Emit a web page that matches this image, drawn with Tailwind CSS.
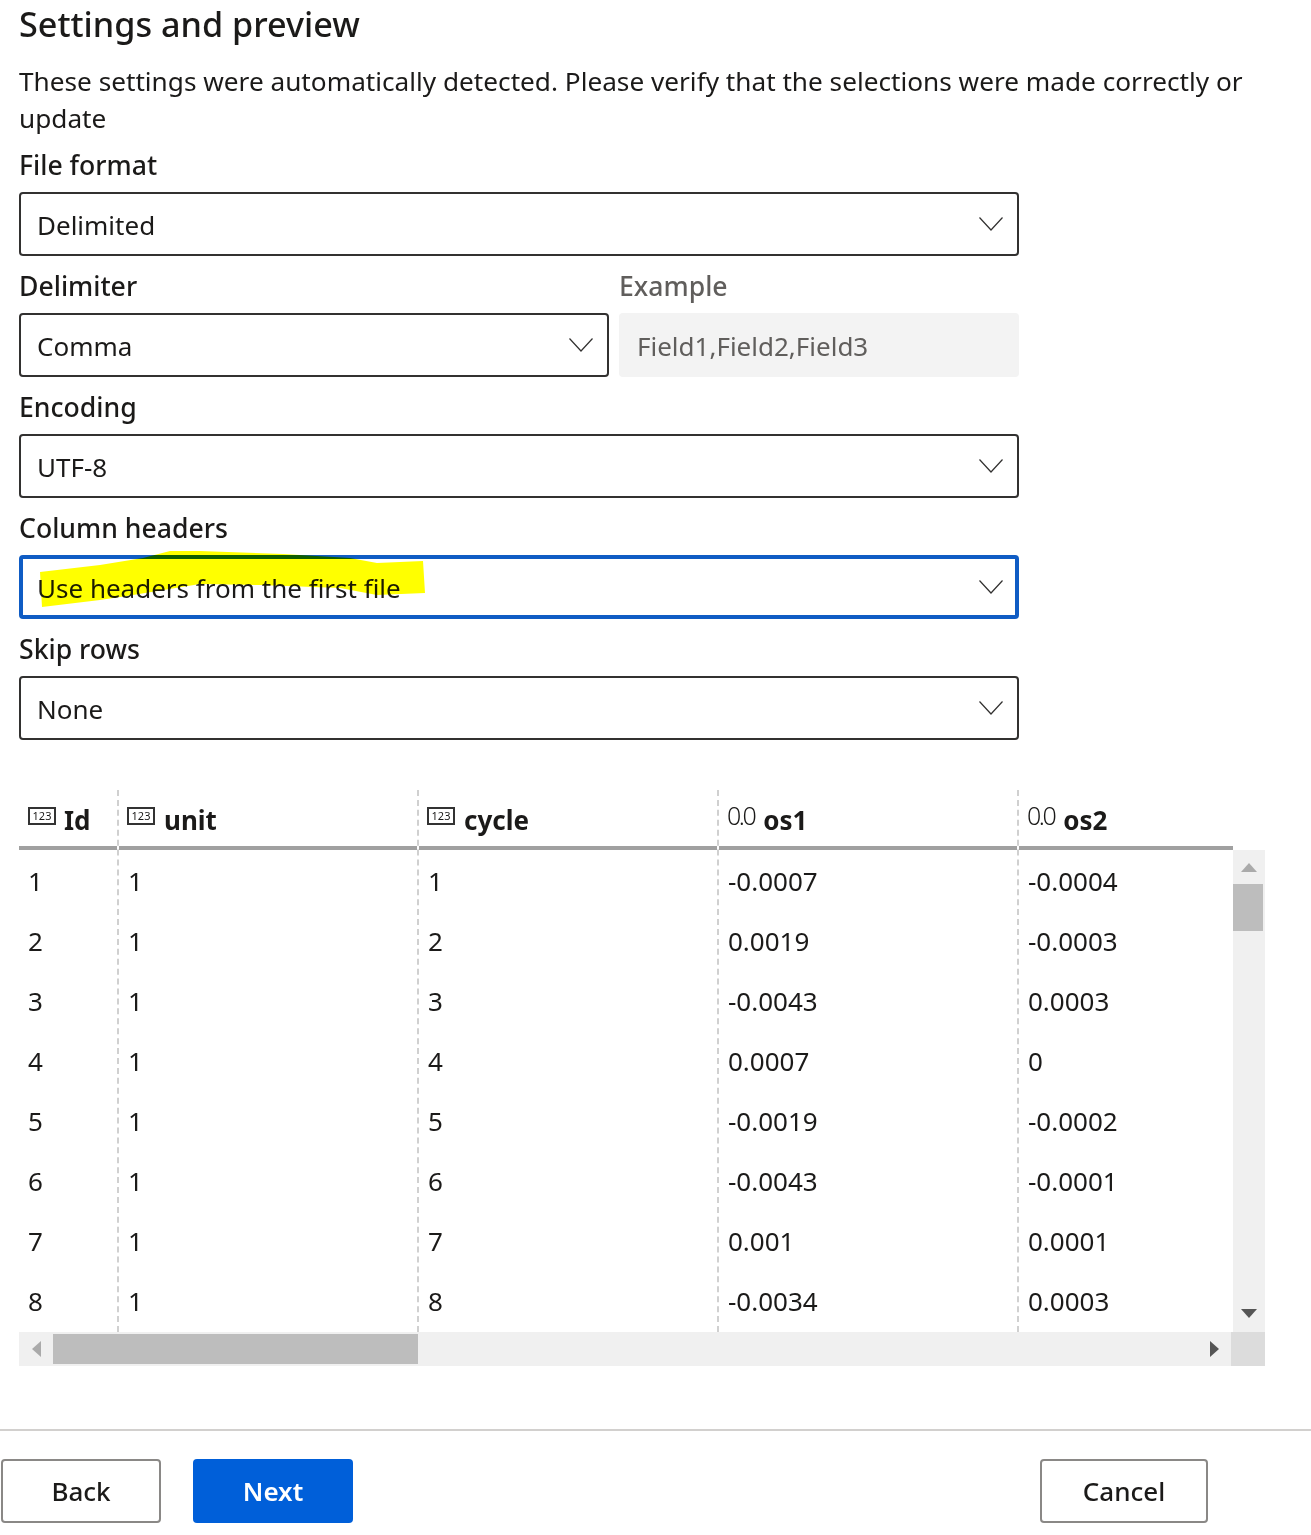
<!DOCTYPE html>
<html lang="en">
<head>
  <meta charset="UTF-8">
  <title>Settings and preview</title>
  <script src="https://cdn.jsdelivr.net/npm/@tailwindcss/browser@4"></script>
</head>
<body class="bg-white text-[#1b1a19] font-['Noto_Sans',sans-serif]">
  <div class="relative w-[1311px] h-[1535px] overflow-hidden">
    <!-- Form -->
    <div class="pl-[19px]">
      <h1 class="h-[48px] text-[34.2px] leading-[47px] font-medium">Settings and preview</h1>
      <p class="mt-[15px] w-[1270px] text-[26.2px] leading-[37px]">These settings were automatically detected. Please verify that the selections were made correctly or update</p>

      <div class="w-[1000px]">
        <label class="block h-[55px] pt-[10px] text-[26.6px] leading-[37px] font-medium">File format</label>
        <div class="flex items-center justify-between h-[64px] pl-[16px] pr-[14px] border-2 border-[#323130] rounded-[4px] text-[26px]">
          <span class="mt-[2px]">Delimited</span>
          <svg class="w-[24px] h-[14px]" viewBox="0 0 24 14" fill="none" stroke="#323130" stroke-width="1.2"><path d="M0.5 0.5 12 13 23.5 0.5"/></svg>
        </div>

        <div class="grid grid-cols-[590px_400px] gap-x-[10px]">
          <div>
            <label class="block h-[57px] pt-[12px] text-[26.6px] leading-[37px] font-medium">Delimiter</label>
            <div class="flex items-center justify-between h-[64px] pl-[16px] pr-[14px] border-2 border-[#323130] rounded-[4px] text-[26px]">
              <span class="mt-[2px]">Comma</span>
              <svg class="w-[24px] h-[14px]" viewBox="0 0 24 14" fill="none" stroke="#323130" stroke-width="1.2"><path d="M0.5 0.5 12 13 23.5 0.5"/></svg>
            </div>
          </div>
          <div>
            <label class="block h-[57px] pt-[12px] text-[26.6px] leading-[37px] font-medium text-[#605e5c]">Example</label>
            <div class="flex items-center h-[64px] pl-[18px] pt-[2px] rounded-[4px] bg-[#f3f3f3] text-[26px] text-[#605e5c]">Field1,Field2,Field3</div>
          </div>
        </div>

        <label class="block h-[57px] pt-[12px] text-[26.6px] leading-[37px] font-medium">Encoding</label>
        <div class="flex items-center justify-between h-[64px] pl-[16px] pr-[14px] border-2 border-[#323130] rounded-[4px] text-[26px]">
          <span class="mt-[2px]">UTF-8</span>
          <svg class="w-[24px] h-[14px]" viewBox="0 0 24 14" fill="none" stroke="#323130" stroke-width="1.2"><path d="M0.5 0.5 12 13 23.5 0.5"/></svg>
        </div>

        <label class="block h-[57px] pt-[12px] text-[26.6px] leading-[37px] font-medium">Column headers</label>
        <div class="flex items-center justify-between h-[64px] pl-[14px] pr-[12px] border-4 border-[#0f5cc4] rounded-[4px] text-[26px]">
          <span class="mt-[2px]">Use headers from the first file</span>
          <svg class="w-[24px] h-[14px]" viewBox="0 0 24 14" fill="none" stroke="#323130" stroke-width="1.2"><path d="M0.5 0.5 12 13 23.5 0.5"/></svg>
        </div>

        <label class="block h-[57px] pt-[12px] text-[26.6px] leading-[37px] font-medium">Skip rows</label>
        <div class="flex items-center justify-between h-[64px] pl-[16px] pr-[14px] border-2 border-[#323130] rounded-[4px] text-[26px]">
          <span class="mt-[2px]">None</span>
          <svg class="w-[24px] h-[14px]" viewBox="0 0 24 14" fill="none" stroke="#323130" stroke-width="1.2"><path d="M0.5 0.5 12 13 23.5 0.5"/></svg>
        </div>
      </div>

      <!-- Preview table -->
      <div class="mt-[50px] w-[1246px]">
        <div class="flex h-[542px]">
          <div class="flex w-[1214px] text-[26px]">
            <div class="w-[98px]">
              <div class="flex items-center h-[60px] pl-[9px] pt-[2px] border-b-4 border-[#a0a0a0] text-[26px] font-bold">
                <span class="mr-[8px] -mt-[6px] w-[28px] h-[18px] border-2 border-[#333] text-[11px] leading-[14px] text-center font-normal">123</span><span class="mt-[3px]">Id</span>
              </div>
              <div class="mt-[1px] pl-[9px]">
                <div class="h-[60px] leading-[60px]">1</div><div class="h-[60px] leading-[60px]">2</div><div class="h-[60px] leading-[60px]">3</div><div class="h-[60px] leading-[60px]">4</div><div class="h-[60px] leading-[60px]">5</div><div class="h-[60px] leading-[60px]">6</div><div class="h-[60px] leading-[60px]">7</div><div class="h-[60px] leading-[60px]">8</div>
              </div>
            </div>
            <div class="w-[300px] border-l-2 border-dashed border-[#d0d0d0]">
              <div class="flex items-center h-[60px] pl-[8px] pt-[2px] border-b-4 border-[#a0a0a0] text-[26px] font-bold">
                <span class="mr-[9px] -mt-[6px] w-[28px] h-[18px] border-2 border-[#333] text-[11px] leading-[14px] text-center font-normal">123</span><span class="mt-[3px]">unit</span>
              </div>
              <div class="mt-[1px] pl-[9px]">
                <div class="h-[60px] leading-[60px]">1</div><div class="h-[60px] leading-[60px]">1</div><div class="h-[60px] leading-[60px]">1</div><div class="h-[60px] leading-[60px]">1</div><div class="h-[60px] leading-[60px]">1</div><div class="h-[60px] leading-[60px]">1</div><div class="h-[60px] leading-[60px]">1</div><div class="h-[60px] leading-[60px]">1</div>
              </div>
            </div>
            <div class="w-[300px] border-l-2 border-dashed border-[#d0d0d0]">
              <div class="flex items-center h-[60px] pl-[8px] pt-[2px] border-b-4 border-[#a0a0a0] text-[26px] font-bold">
                <span class="mr-[9px] -mt-[6px] w-[28px] h-[18px] border-2 border-[#333] text-[11px] leading-[14px] text-center font-normal">123</span><span class="mt-[3px]">cycle</span>
              </div>
              <div class="mt-[1px] pl-[9px]">
                <div class="h-[60px] leading-[60px]">1</div><div class="h-[60px] leading-[60px]">2</div><div class="h-[60px] leading-[60px]">3</div><div class="h-[60px] leading-[60px]">4</div><div class="h-[60px] leading-[60px]">5</div><div class="h-[60px] leading-[60px]">6</div><div class="h-[60px] leading-[60px]">7</div><div class="h-[60px] leading-[60px]">8</div>
              </div>
            </div>
            <div class="w-[300px] border-l-2 border-dashed border-[#d0d0d0]">
              <div class="flex items-center h-[60px] pl-[8px] pt-[2px] border-b-4 border-[#a0a0a0] text-[26px] font-bold">
                <span class="mr-[9px] -mt-[6px] text-[25px] font-light tracking-[-2.5px]">0.0</span><span class="mt-[3px]">os1</span>
              </div>
              <div class="mt-[1px] pl-[9px]">
                <div class="h-[60px] leading-[60px]">-0.0007</div><div class="h-[60px] leading-[60px]">0.0019</div><div class="h-[60px] leading-[60px]">-0.0043</div><div class="h-[60px] leading-[60px]">0.0007</div><div class="h-[60px] leading-[60px]">-0.0019</div><div class="h-[60px] leading-[60px]">-0.0043</div><div class="h-[60px] leading-[60px]">0.001</div><div class="h-[60px] leading-[60px]">-0.0034</div>
              </div>
            </div>
            <div class="w-[216px] border-l-2 border-dashed border-[#d0d0d0]">
              <div class="flex items-center h-[60px] pl-[8px] pt-[2px] border-b-4 border-[#a0a0a0] text-[26px] font-bold">
                <span class="mr-[9px] -mt-[6px] text-[25px] font-light tracking-[-2.5px]">0.0</span><span class="mt-[3px]">os2</span>
              </div>
              <div class="mt-[1px] pl-[9px]">
                <div class="h-[60px] leading-[60px]">-0.0004</div><div class="h-[60px] leading-[60px]">-0.0003</div><div class="h-[60px] leading-[60px]">0.0003</div><div class="h-[60px] leading-[60px]">0</div><div class="h-[60px] leading-[60px]">-0.0002</div><div class="h-[60px] leading-[60px]">-0.0001</div><div class="h-[60px] leading-[60px]">0.0001</div><div class="h-[60px] leading-[60px]">0.0003</div>
              </div>
            </div>
          </div>

          <!-- Vertical scrollbar -->
          <div class="mt-[60px] w-[32px] bg-[#f0f0f0] flex flex-col items-center">
            <svg class="mt-[13px] w-[16px] h-[9px]" viewBox="0 0 16 9" fill="#aaaaaa"><path d="M8 0 16 9H0z"/></svg>
            <div class="mt-[12px] mr-[2px] w-[30px] h-[47px] bg-[#bdbdbd]"></div>
            <svg class="mt-[378px] w-[16px] h-[9px]" viewBox="0 0 16 9" fill="#555555"><path d="M0 0H16L8 9z"/></svg>
          </div>
        </div>

        <!-- Horizontal scrollbar -->
        <div class="flex h-[34px]">
          <div class="w-[1212px] bg-[#f0f0f0] flex items-center">
            <svg class="ml-[13px] w-[9px] h-[16px]" viewBox="0 0 9 16" fill="#aaaaaa"><path d="M9 0V16L0 8z"/></svg>
            <div class="ml-[12px] w-[365px] h-[30px] bg-[#bdbdbd]"></div>
            <svg class="ml-[792px] w-[9px] h-[16px]" viewBox="0 0 9 16" fill="#555555"><path d="M0 0 9 8 0 16z"/></svg>
          </div>
          <div class="w-[34px] bg-[#dcdcdc]"></div>
        </div>
      </div>
    </div>

    <!-- Footer -->
    <div class="mt-[63px] border-t-2 border-[#d2d0ce] pt-[28px] pl-px pr-[103px] flex">
      <button class="w-[160px] h-[64px] border-2 border-[#8a8886] rounded-[4px] text-[26px] font-medium">Back</button>
      <button class="ml-[32px] w-[160px] h-[64px] bg-[#005fd9] rounded-[4px] text-[26px] font-semibold text-white">Next</button>
      <button class="ml-auto w-[168px] h-[64px] border-2 border-[#8a8886] rounded-[4px] text-[26px] font-medium">Cancel</button>
    </div>

    <!-- Yellow marker scribble over the column headers field -->
    <svg class="absolute left-0 top-0 w-[1311px] h-[1535px] mix-blend-multiply pointer-events-none" viewBox="0 0 1311 1535">
      <path fill="#ffff00" d="M40 572 100 565 143 558 170 551 200 551 283 554 350 558 377 563 423 561 425 593 377 595 340 588 260 585 200 584 133 595 100 600 42 607z"/>
    </svg>
  </div>
</body>
</html>
